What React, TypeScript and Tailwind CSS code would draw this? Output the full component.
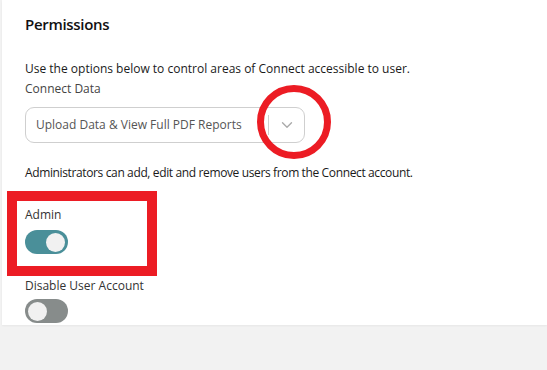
import { ChevronDown } from 'lucide-react';

function Toggle({ on }: { on: boolean }) {
  return (
    <div
      className={`w-[43px] h-[24px] rounded-full flex items-center px-[3px] ${
        on ? 'bg-[#4a8f99] justify-end' : 'bg-[#878c8b] justify-start'
      }`}
    >
      <div className="w-[19px] h-[19px] rounded-full bg-[#f1f1f1]" />
    </div>
  );
}

export default function App() {
  return (
    <div className="w-[547px] h-[370px] bg-[#f2f2f2] font-['Open_Sans',sans-serif] text-[#1a1a1a] relative overflow-hidden">
      <div className="ml-[2px] h-[325px] bg-white shadow-[0_1px_2px_rgba(0,0,0,0.05)] pl-[23px] pt-[13px]">
        <h2 className="text-[15px] leading-[22px] font-semibold tracking-[-0.3px] text-[#111]">Permissions</h2>

        <p className="mt-[26px] text-[12px] leading-[16px]">
          Use the options below to control areas of Connect accessible to user.
        </p>
        <div className="mt-[4px] text-[12px] leading-[16px] text-[#444]">Connect Data</div>

        {/* data access select */}
        <div className="mt-[10px] w-[280px] h-[36px] border border-[#cfcfcf] rounded-[9px] flex items-center">
          <span className="flex-1 pl-[10px] text-[12px] text-[#555] whitespace-nowrap">
            Upload Data &amp; View Full PDF Reports
          </span>
          <div className="w-px h-[20px] bg-[#cfcfcf]" />
          <div className="w-[35px] flex justify-center">
            <ChevronDown className="w-[18px] h-[18px] text-[#aaa]" strokeWidth={1.8} />
          </div>
        </div>

        <p className="mt-[22px] text-[12px] leading-[16px] tracking-[-0.37px] whitespace-nowrap">
          Administrators can add, edit and remove users from the Connect account.
        </p>

        <div className="mt-[26px] text-[12px] leading-[16px] text-[#333]">Admin</div>
        <div className="mt-[7px]">
          <Toggle on />
        </div>

        <div className="mt-[24px] text-[12px] leading-[16px] text-[#333]">Disable User Account</div>
        <div className="mt-[5px]">
          <Toggle on={false} />
        </div>
      </div>

      {/* annotations */}
      <div className="absolute left-[257px] top-[85px] w-[74px] h-[74px] rounded-full border-[7px] border-[#ec1c24]" />
      <div className="absolute left-[7px] top-[191px] w-[150px] h-[85px] border-[10px] border-[#ec1c24]" />
    </div>
  );
}
